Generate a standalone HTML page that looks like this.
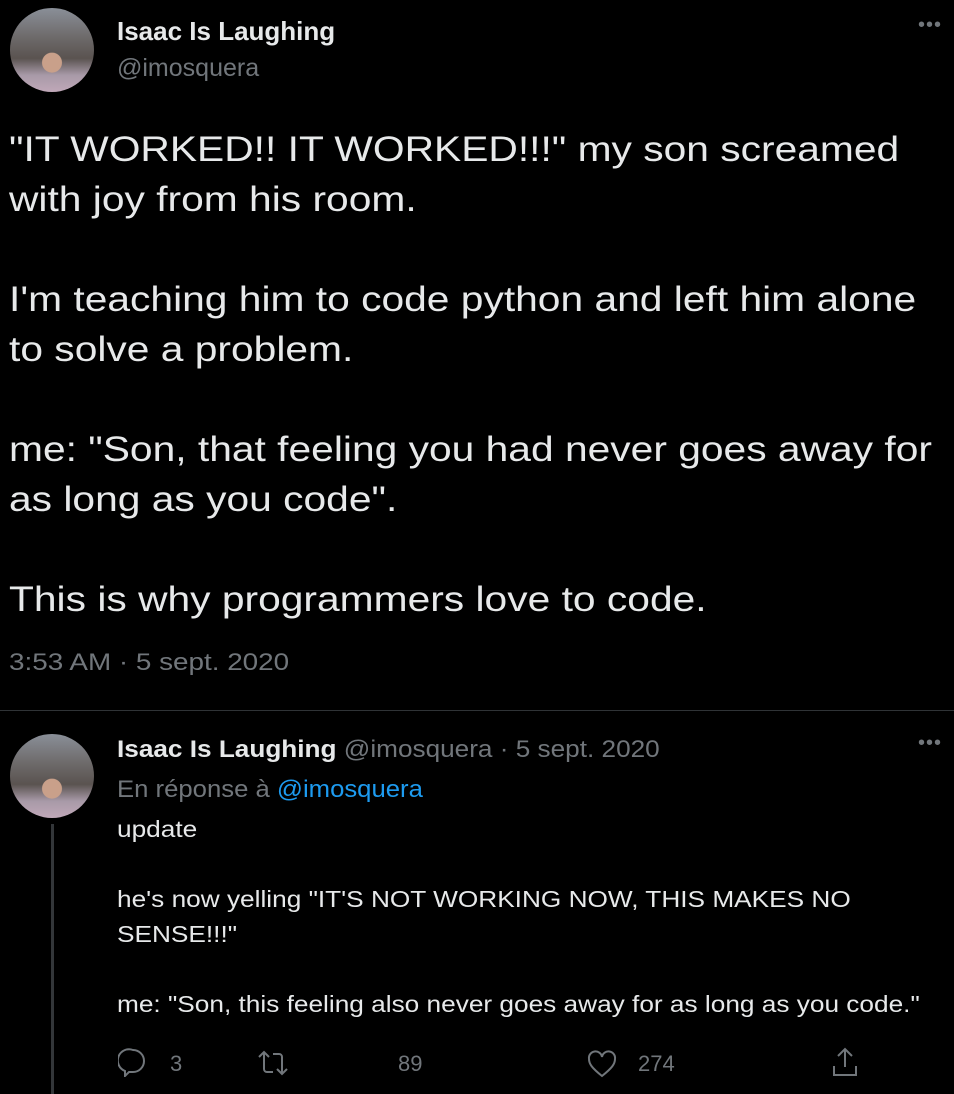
<!DOCTYPE html>
<html><head><style>
body{margin:0;width:954px;height:1090px;background:#000;color:#e7e9ea;font-family:"Liberation Sans",sans-serif;position:relative;overflow:hidden}
.a{position:absolute;white-space:nowrap;transform-origin:0 0}
.av{position:absolute;width:84px;height:84px;border-radius:50%;background:radial-gradient(circle at 50% 65%,#c9a08a 0 14%,transparent 15%),linear-gradient(#8a8f98 0,#6d6a6a 35%,#5a5350 60%,#a89aa8 80%,#c0a8b8 100%);overflow:hidden}
.g{color:#71767b}
.dots{position:absolute;color:#71767b;font-size:20px;letter-spacing:1px}
svg{position:absolute}
</style></head><body>
<div class="av" style="left:10px;top:8px"></div>
<div class="a" style="left:117px;top:16px;font-size:26px;font-weight:bold">Isaac Is Laughing</div>
<div class="a g" style="left:117px;top:54px;font-size:25px">@imosquera</div>
<div class="dots" style="left:918px;top:14px">•••</div>
<div class="a" style="left:9px;top:124px;font-size:35.5px;line-height:50px;transform:scaleX(1.148)">"IT WORKED!! IT WORKED!!!" my son screamed<br>with joy from his room.<br><br>I'm teaching him to code python and left him alone<br>to solve a problem.<br><br>me: "Son, that feeling you had never goes away for<br>as long as you code".<br><br>This is why programmers love to code.</div>
<div class="a g" style="left:9px;top:649px;font-size:24px;transform:scaleX(1.16)">3:53 AM · 5 sept. 2020</div>
<div style="position:absolute;left:0;top:710px;width:954px;height:1px;background:#2f3336"></div>
<div class="av" style="left:10px;top:734px"></div>
<div style="position:absolute;left:51px;top:824px;width:3px;height:270px;background:#333639"></div>
<div class="a" style="left:117px;top:736px;font-size:24px;transform:scaleX(1.09)"><b>Isaac Is Laughing</b> <span class="g">@imosquera · 5 sept. 2020</span></div>
<div class="dots" style="left:918px;top:732px">•••</div>
<div class="a g" style="left:117px;top:776px;font-size:24px;transform:scaleX(1.07)">En réponse à <span style="color:#1d9bf0">@imosquera</span></div>
<div class="a" style="left:117px;top:812px;font-size:23px;line-height:35px;transform:scaleX(1.14)">update<br><br>he's now yelling "IT'S NOT WORKING NOW, THIS MAKES NO<br>SENSE!!!"<br><br>me: "Son, this feeling also never goes away for as long as you code."</div>
<svg style="left:118px;top:1047px" width="30" height="30" viewBox="0 0 30 30" fill="none" stroke="#71767b" stroke-width="2"><path d="M15 3a11 11 0 0 1 0 22h-4l-4 4v-5A11 11 0 0 1 15 3z"/></svg>
<div class="a g" style="left:170px;top:1051px;font-size:22px">3</div>
<svg style="left:256px;top:1049px" width="34" height="28" viewBox="0 0 34 28" fill="none" stroke="#71767b" stroke-width="2"><path d="M3 8l5-5 5 5M8 3v17a3 3 0 0 0 3 3h6M31 20l-5 5-5-5M26 25V8a3 3 0 0 0-3-3h-6"/></svg>
<div class="a g" style="left:398px;top:1051px;font-size:22px">89</div>
<svg style="left:586px;top:1049px" width="32" height="30" viewBox="0 0 32 30" fill="none" stroke="#71767b" stroke-width="2"><path d="M16 27C6 19 3 15 3 10a6 6 0 0 1 13-2 6 6 0 0 1 13 2c0 5-3 9-13 17z"/></svg>
<div class="a g" style="left:638px;top:1051px;font-size:22px">274</div>
<svg style="left:830px;top:1046px" width="30" height="32" viewBox="0 0 30 32" fill="none" stroke="#71767b" stroke-width="2"><path d="M15 3v18M8 10l7-7 7 7M4 20v9h22v-9"/></svg>
</body></html>
